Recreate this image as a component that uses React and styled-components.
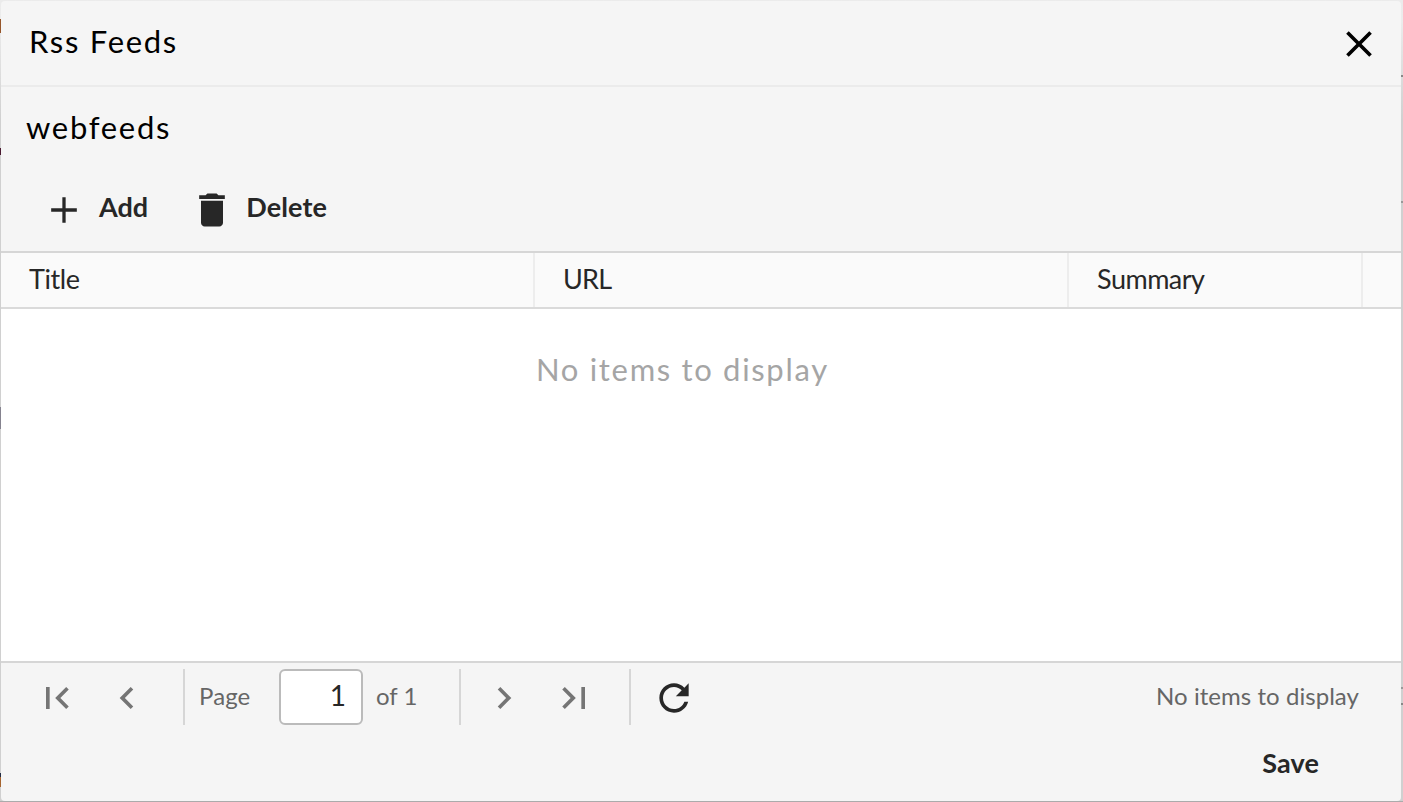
import React from "react";
import styled, { createGlobalStyle } from "styled-components";

const Global = createGlobalStyle`
  *, *::before, *::after { box-sizing: border-box; }
  body { margin: 0; font-family: Lato, "Liberation Sans", sans-serif; overflow: hidden; }
  button, input { font: inherit; color: inherit; margin: 0; }
`;

const Backdrop = styled.div`
  width: 1403px;
  height: 802px;
  padding: 1px 2px 1px 1px;
  background:
    linear-gradient(#a5642f, #a5642f) 0 777px / 1px 10px no-repeat,
    linear-gradient(#222c44, #222c44) 0 773px / 1px 4px no-repeat,
    linear-gradient(#85838f, #85838f) 0 407px / 1px 22px no-repeat,
    linear-gradient(#4a1a30, #4a1a30) 0 148px / 1px 7px no-repeat,
    linear-gradient(#96562b, #96562b) 0 19px / 1px 14px no-repeat,
    linear-gradient(#888, #888) 1401px 75px / 2px 2px no-repeat,
    linear-gradient(#999, #999) 1401px 201px / 2px 2px no-repeat,
    linear-gradient(#999, #999) 1401px 687px / 2px 2px no-repeat,
    linear-gradient(#888, #888) 1401px 703px / 2px 2px no-repeat,
    linear-gradient(#ababab, #ababab) 0 801px / 100% 1px no-repeat,
    linear-gradient(#ebebeb 0, #ececec 20px, #d0d0d0 120px, #d0d0d0 100%);
`;

const Dialog = styled.section`
  height: 800px;
  display: flex;
  flex-direction: column;
  background: #f5f5f5;
  border-radius: 4px;
  color: #272727;
  overflow: hidden;
`;

const Header = styled.header`
  display: flex;
  justify-content: space-between;
  height: 86px;
  padding: 20px 20px 0 28px;
  border-bottom: 2px solid #ebebeb;
  color: #000;
`;

const Label = styled.span`
  font-size: ${(p) => p.$size}px;
  line-height: 40px;
  font-weight: ${(p) => (p.$bold ? 700 : 400)};
  letter-spacing: ${(p) => p.$track || 0}px;
  color: ${(p) => p.$color || "inherit"};
  white-space: nowrap;
`;

const IconButton = styled.button`
  display: flex;
  align-items: center;
  height: 44px;
  padding: 0;
  border: 0;
  background: none;
  color: ${(p) => p.$color || "inherit"};
  margin-left: ${(p) => p.$before || 0}px;
  gap: ${(p) => p.$gap || 0}px;
`;

const CloseButton = styled(IconButton)`
  margin-top: 1px;
`;

const Glyph = styled.svg`
  width: 44px;
  height: 44px;
  flex: none;
  fill: currentColor;
`;

const FormTitle = styled.div`
  height: 101px;
  padding: 20px 25px 0;
  color: #000;
`;

const Toolbar = styled.div`
  display: flex;
  height: 63px;
  padding-left: 41px;
  ${Label} { margin-bottom: 6px; }
`;

const ColumnHeads = styled.div`
  display: grid;
  grid-template-columns: 534px 534px 294px 1fr;
  height: 58px;
  border-top: 2px solid #d6d6d6;
  border-bottom: 2px solid #dadada;
  background: #fafafa;
`;

const ColumnHead = styled.div`
  padding: 6px 0 0 28px;
  border-right: 2px solid #ededed;
  &:last-child { border-right: 0; }
`;

const Empty = styled.div`
  height: 352px;
  padding: 40px 0 0 535px;
  background: #fff;
`;

const Pager = styled.div`
  display: flex;
  height: 72px;
  padding: 6px 42px 0 33px;
  border-top: 2px solid #d6d6d6;
  color: #666;
  > ${IconButton} { margin-top: 7px; }
  > ${Label} { margin-top: 7px; }
`;

const Divider = styled.i`
  width: 2px;
  height: 56px;
  background: #d6d6d6;
  margin-left: ${(p) => p.$before || 0}px;
`;

const PageLabel = styled(Label)`
  width: ${(p) => p.$width}px;
  padding-left: ${(p) => p.$inset}px;
`;

const PageInput = styled.input`
  width: 84px;
  height: 56px;
  padding: 0 15px 4px;
  border: 2px solid #bbb;
  border-radius: 6px;
  background: #fff;
  color: #272727;
  font-size: 28px;
  text-align: right;
  outline: 0;
`;

const Status = styled(Label)`
  margin-left: auto;
`;

const Footer = styled.footer`
  display: flex;
  justify-content: flex-end;
  padding: 10px 82px 0 0;
`;

const SaveButton = styled.button`
  padding: 0;
  border: 0;
  background: none;
`;

const paths = {
  close: "M19 6.41 17.59 5 12 10.59 6.41 5 5 6.41 10.59 12 5 17.59 6.41 19 12 13.41 17.59 19 19 17.59 13.41 12z",
  add: "M19 12.9h-6.1V19h-1.8v-6.1H5v-1.8h6.1V5h1.8v6.1H19z",
  trash: "M6 19c0 1.1.9 2 2 2h8c1.1 0 2-.9 2-2V7H6v12zM19 4h-3.5l-1-1h-5l-1 1H5v2h14V4z",
  first: "M18.41 16.59 13.82 12l4.59-4.59L17 6l-6 6 6 6zM6 6h2v12H6z",
  prev: "M15.41 7.41 14 6l-6 6 6 6 1.41-1.41L10.83 12z",
  next: "M10 6 8.59 7.41 13.17 12l-4.58 4.59L10 18l6-6z",
  last: "M5.59 7.41 10.18 12l-4.59 4.59L7 18l6-6-6-6zM16 6h2v12h-2z",
  refresh: "M17.65 6.35C16.2 4.9 14.21 4 12 4c-4.42 0-7.99 3.58-7.99 8s3.57 8 7.99 8c3.73 0 6.84-2.55 7.73-6h-2.08c-.82 2.33-3.04 4-5.65 4-3.31 0-6-2.69-6-6s2.69-6 6-6c1.66 0 3.14.69 4.22 1.78L13 11h7V4z",
};

const Icon = ({ name }) => (
  <Glyph viewBox="0 0 24 24" aria-hidden="true">
    <path d={paths[name]} />
  </Glyph>
);

export default function App() {
  return (
    <>
      <Global />
      <Backdrop>
        <Dialog>
          <Header>
            <Label $size={31} $track={1.7}>Rss Feeds</Label>
            <CloseButton aria-label="Close"><Icon name="close" /></CloseButton>
          </Header>
          <FormTitle><Label $size={31} $track={1.7}>webfeeds</Label></FormTitle>
          <Toolbar>
            <IconButton $gap={13}>
              <Icon name="add" />
              <Label $size={27} $bold>Add</Label>
            </IconButton>
            <IconButton $before={41.5} $gap={12.5}>
              <Icon name="trash" />
              <Label $size={27} $track={0.15} $bold>Delete</Label>
            </IconButton>
          </Toolbar>
          <ColumnHeads>
            <ColumnHead><Label $size={27} $track={-0.4}>Title</Label></ColumnHead>
            <ColumnHead><Label $size={27} $track={-0.8}>URL</Label></ColumnHead>
            <ColumnHead><Label $size={27} $track={-0.5}>Summary</Label></ColumnHead>
            <ColumnHead />
          </ColumnHeads>
          <Empty><Label $size={31} $track={1.68} $color="#a5a5a5">No items to display</Label></Empty>
          <Pager>
            <IconButton $before={1} $color="#757575" aria-label="First page"><Icon name="first" /></IconButton>
            <IconButton $before={26} $color="#757575" aria-label="Previous page"><Icon name="prev" /></IconButton>
            <Divider $before={34} />
            <PageLabel $size={24} $track={0.1} $width={94} $inset={14}>Page</PageLabel>
            <PageInput defaultValue="1" aria-label="Page number" />
            <PageLabel $size={24} $width={96} $inset={13}>of 1</PageLabel>
            <Divider />
            <IconButton $before={20.5} $color="#757575" aria-label="Next page"><Icon name="next" /></IconButton>
            <IconButton $before={26} $color="#757575" aria-label="Last page"><Icon name="last" /></IconButton>
            <Divider $before={33.5} />
            <IconButton $before={20.5} $color="#272727" aria-label="Refresh"><Icon name="refresh" /></IconButton>
            <Status $size={24} $track={0.05}>No items to display</Status>
          </Pager>
          <Footer><SaveButton><Label $size={27} $track={0.1} $bold>Save</Label></SaveButton></Footer>
        </Dialog>
      </Backdrop>
    </>
  );
}
